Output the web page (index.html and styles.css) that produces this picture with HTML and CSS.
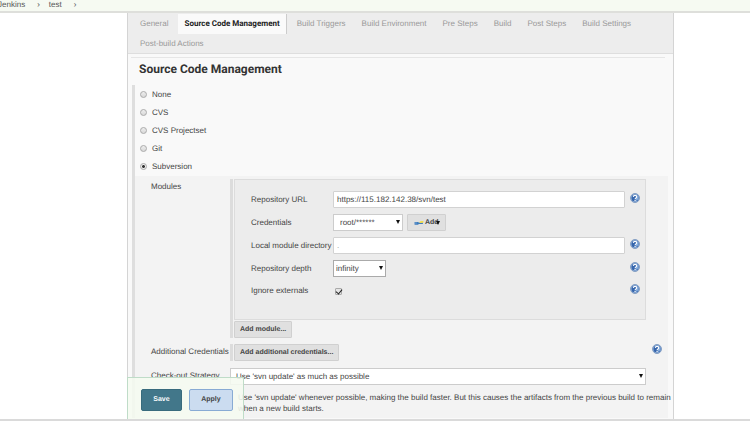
FILE: index.html
```html
<!DOCTYPE html>
<html lang="en">
<head>
<meta charset="utf-8">
<title>test Config [Jenkins]</title>
<link rel="stylesheet" href="styles.css">
</head>
<body>
<svg width="0" height="0" class="sprite" aria-hidden="true">
  <symbol id="help" viewBox="0 0 20 20">
    <circle cx="10" cy="10" r="9" fill="#a9c4e6" stroke="#6f8db8" stroke-width="1.6"/>
    <circle cx="10" cy="10" r="7.2" fill="#3565ac"/>
    <path d="M12 3.4a7.2 7.2 0 0 1 4 9.800l-4 2.800z" fill="#86aede"/>
    <path d="M6.600 7.800C6.800 3.800 13.400 3.800 13.400 7.600c0 2.600-3.200 2.400-3.200 4.800" fill="none" stroke="#fff" stroke-width="2.200"/>
    <circle cx="10.200" cy="15" r="1.400" fill="#fff"/>
  </symbol>
  <symbol id="arrow" viewBox="0 0 5 5"><path d="M0 0h5L2.500 5z" fill="#111"/></symbol>
</svg>
<nav class="crumbs" aria-label="Breadcrumb">
  <a href="#">Jenkins</a><span>›</span><a href="#">test</a><span>›</span>
</nav>
<main class="page">
  <form class="panel">
    <div class="tabs">
      <a href="#">General</a>
      <a href="#" class="active">Source Code Management</a>
      <a href="#">Build Triggers</a>
      <a href="#">Build Environment</a>
      <a href="#">Pre Steps</a>
      <a href="#">Build</a>
      <a href="#">Post Steps</a>
      <a href="#">Build Settings</a>
      <a href="#">Post-build Actions</a>
    </div>
    <h1>Source Code Management</h1>
    <div class="scm">
      <div class="choices">
        <label><input type="radio" name="scm">None</label>
        <label><input type="radio" name="scm">CVS</label>
        <label><input type="radio" name="scm">CVS Projectset</label>
        <label><input type="radio" name="scm">Git</label>
        <label><input type="radio" name="scm" checked>Subversion</label>
      </div>
      <div class="details">
        <div class="row">
          <span class="name">Modules</span>
          <div class="group">
            <div class="module">
              <label for="url">Repository URL</label>
              <input class="text" id="url" type="text" value="https://115.182.142.38/svn/test">
              <svg class="help"><use href="#help"/></svg>
              <label for="cred">Credentials</label>
              <div class="inline">
                <span class="select cred"><select id="cred"><option>root/******</option></select><svg><use href="#arrow"/></svg></span>
                <button type="button" class="btn add"><svg class="key" viewBox="0 0 18 10"><path d="M1 3h6l2 1h7v3H9L7 8H1z" fill="#3f7cbd"/><path d="M2 5h3" stroke="#a9cdec"/><path d="M9 4l4-3 1 1 3-1v3l-5 1z" fill="#f3df45"/></svg>Add<svg class="caret"><use href="#arrow"/></svg></button>
              </div>
              <span></span>
              <label for="dir">Local module directory</label>
              <input class="text dot" id="dir" type="text" value=".">
              <svg class="help"><use href="#help"/></svg>
              <label for="depth">Repository depth</label>
              <div class="inline"><span class="select depth"><select id="depth"><option>infinity</option></select><svg><use href="#arrow"/></svg></span></div>
              <svg class="help"><use href="#help"/></svg>
              <label for="ext">Ignore externals</label>
              <div class="inline"><input class="check" id="ext" type="checkbox" checked></div>
              <svg class="help"><use href="#help"/></svg>
            </div>
            <button type="button" class="btn">Add module...</button>
          </div>
        </div>
        <div class="row extra">
          <span class="name">Additional Credentials</span>
          <div class="group"><button type="button" class="btn">Add additional credentials...</button></div>
          <svg class="help"><use href="#help"/></svg>
        </div>
        <div class="row strategy">
          <label class="name" for="strategy">Check-out Strategy</label>
          <div>
            <span class="select wide"><select id="strategy"><option>Use 'svn update' as much as possible</option></select><svg><use href="#arrow"/></svg></span>
          </div>
          <p>Use 'svn update' whenever possible, making the build faster. But this causes the artifacts from the previous build to remain when a new build starts.</p>
        </div>
      </div>
    </div>
    <div class="actions">
      <button type="submit" class="save">Save</button>
      <button type="button" class="apply">Apply</button>
    </div>
  </form>
</main>
<div class="edge"></div>
</body>
</html>
```
FILE: styles.css
```css
* { box-sizing: border-box; }
body {
  margin: 0;
  min-height: 100vh;
  display: flex;
  flex-direction: column;
  background: #fff;
  color: #444;
  font: 8px/12px "Liberation Sans", Arial, sans-serif;
  text-rendering: geometricPrecision;
}
a { color: inherit; text-decoration: none; }
input, select, button { font: inherit; color: inherit; margin: 0; text-rendering: inherit; }
svg { display: block; }
h1, .tabs .active { font-family: Roboto, Arial, sans-serif; }
.sprite { position: absolute; }
.crumbs {
  display: flex;
  height: 13px;
  line-height: 9px;
  background: #f6faf2;
  border-bottom: 2px solid #dedfdb;
  color: #555;
}
.crumbs a:first-child { margin-left: -2px; }
.crumbs span { margin: 0 9px 0 12px; }
.page {
  flex: 1;
  display: flex;
  margin: 0 76px 0 127px;
}
.panel {
  flex: 1;
  min-width: 0;
  background: #f9f9f9;
  border: 1px solid #d4d4d4;
  border-width: 0 1px;
}
.tabs {
  display: flex;
  flex-wrap: wrap;
  padding: 1px 6px 0;
  background: #ededed;
  border-bottom: 1px solid #dedede;
  color: #999;
}
.tabs a {
  padding: 0 6px;
  margin-right: 4px;
  line-height: 20px;
}
.tabs a:last-child { line-height: 19px; }
.tabs .active {
  background: #fafafa;
  border-right: 1px solid #ccc;
  color: #222;
  font-weight: bold;
}
h1 {
  margin: 3px 8px 9px 3px;
  padding: 4px 8px 0;
  border-top: 1px solid #e6e6e6;
  color: #333;
  font-size: 12px;
  line-height: 14px;
}
.scm {
  margin: 0 5px 0 4px;
  border-left: 3px solid #dedede;
}
.choices { padding: 1px 0 0 5px; }
.choices label {
  display: flex;
  align-items: center;
  gap: 5px;
  height: 18px;
}
.choices input {
  appearance: none;
  width: 7px;
  height: 7px;
  margin-bottom: 2px;
  border: 1px solid #aaa;
  border-radius: 50%;
  background: linear-gradient(#eee, #d8d8d8);
}
.choices input:checked { background: radial-gradient(circle, #333 30%, #eee 50%); }
.details {
  padding: 3px 0 4px 16px;
  background: #f3f3f3;
}
.row {
  display: grid;
  grid-template-columns: 79px minmax(0, 1fr) 22px;
}
.name { padding-top: 2px; white-space: nowrap; }
.group { border-left: 3px solid #dcdcdc; padding-left: 1px; }
.module {
  display: grid;
  grid-template-columns: 77px minmax(0, 1fr) 10px;
  grid-template-rows: 23px 23px 23px 23px 22px;
  column-gap: 5px;
  align-items: center;
  padding: 8px 5px 17px 16px;
  margin-bottom: 1px;
  background: #ececec;
  border: 1px solid #dcdcdc;
}
.module label { white-space: nowrap; }
.help { width: 10px; height: 10px; }
.module .help { margin-bottom: 4px; }
.text {
  height: 17px;
  padding: 0 3px;
  background: #fff;
  border: 1px solid #d2d2d2;
  border-radius: 1px;
  min-width: 0;
}
.inline { display: flex; align-items: center; gap: 4px; }
.select {
  position: relative;
  display: flex;
  height: 17px;
}
.select select {
  appearance: none;
  width: 100%;
  padding: 0 2px;
  background: #fff;
  border: 1px solid #ccc;
  border-radius: 0;
}
.select svg {
  position: absolute;
  top: 6px;
  right: 3px;
  width: 4px;
  height: 4px;
  pointer-events: none;
}
.cred { width: 70px; }
.cred select { padding-left: 6px; }
.depth { width: 53px; }
.depth select { border-color: #aaa; }
.wide select { padding-left: 5px; }
.check {
  appearance: none;
  width: 7px;
  height: 7px;
  margin-left: 2px;
  background: #e5e5e5;
  border: 1px solid #aaa;
  border-radius: 1px;
}
.check:checked::after {
  content: "";
  display: block;
  width: 3px;
  height: 5px;
  margin: -1px 0 0 1px;
  border: solid #222;
  border-width: 0 1px 1px 0;
  transform: rotate(40deg);
}
.btn {
  display: flex;
  align-items: center;
  height: 17px;
  padding: 0 5px;
  background: #e0e0e0;
  border: 1px solid #d0d0d0;
  border-radius: 1px;
  font-size: 7px;
  font-weight: bold;
}
.add { padding: 0 5px 0 6px; }
.key { width: 10px; height: 6px; margin-right: 1px; }
.caret { width: 4px; height: 4px; margin-left: -3px; }
.extra { padding: 6px 0 7px; }
.extra .help { margin-left: 6px; }
.strategy p {
  grid-column: 2 / 4;
  margin: 7px -6px 0 8px;
  line-height: 11px;
}
.actions {
  position: fixed;
  left: 127px;
  bottom: 2px;
  display: flex;
  gap: 7px;
  padding: 11px 10px 8px 13px;
  background: rgba(245, 250, 240, .88);
  border: 1px solid #bfdcc8;
  border-bottom: 0;
}
.actions button {
  height: 22px;
  border-radius: 2px;
  font-size: 7px;
  font-weight: bold;
}
.save { width: 41px; background: #42778a; border: 1px solid #386b7d; }
.actions .save { color: #fff; }
.apply { width: 44px; background: #cbdcf0; border: 1px solid #88abd4; }
.dot { color: #999; }
.edge {
  position: fixed;
  left: 0;
  right: 0;
  bottom: 0;
  height: 2px;
  background: #dadada;
}
```
